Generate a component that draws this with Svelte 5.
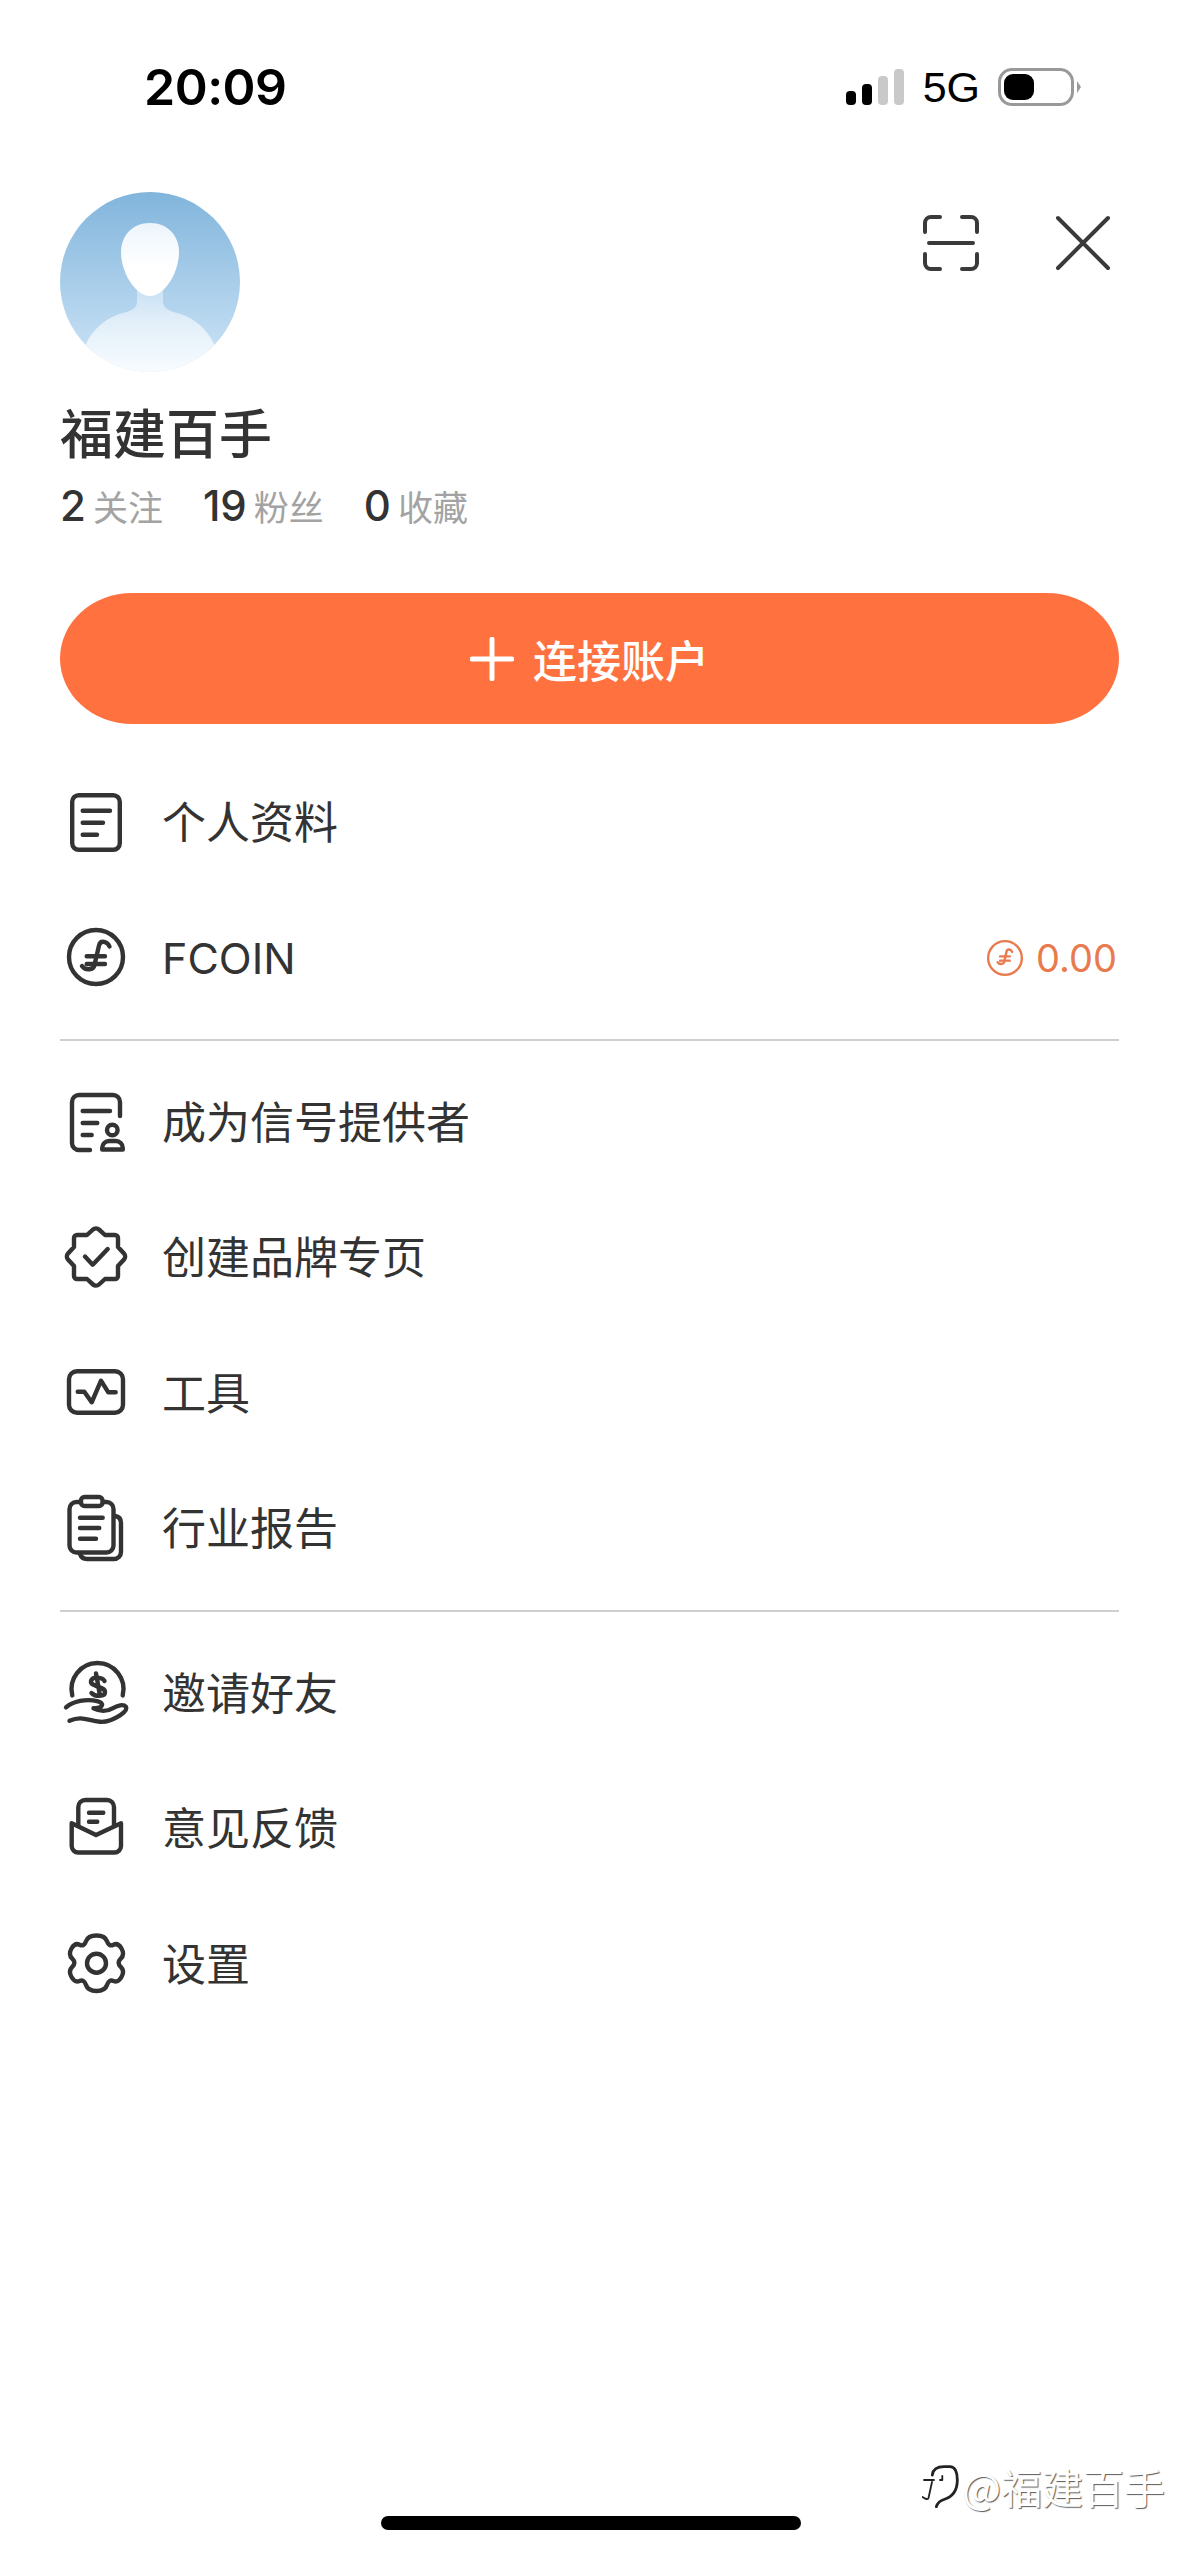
<script>
  const coinF = "M49.500 24.500c-2-5-9-7-10.500-1L34.500 43c-1 5-9 6-12.500 1";

  // gear outline: corners smoothed through the middle of each edge
  const gearPts = [
    [28, 6.5], [45, 6.5], [49, 18], [58, 13.5], [65, 25.5], [56.5, 33.8],
    [65, 42], [58, 54], [49, 50], [45, 62], [28, 62], [24, 50],
    [15, 54], [8, 42], [16.5, 33.8], [8, 25.5], [15, 13.5], [24, 18]
  ];

  function gearPath() {
    const mid = (p, q) => (p[0] + q[0]) / 2 + " " + (p[1] + q[1]) / 2;
    let d = "M" + mid(gearPts[0], gearPts[1]);
    for (let i = 1; i <= gearPts.length; i++) {
      const p = gearPts[i % gearPts.length];
      const q = gearPts[(i + 1) % gearPts.length];
      d += "Q" + p[0] + " " + p[1] + " " + mid(p, q);
    }
    return d + "Z";
  }

  const groups = [
    [
      { label: "个人资料", icon: "doc" },
      { label: "FCOIN", icon: "coin", value: "0.00" }
    ],
    [
      { label: "成为信号提供者", icon: "provider" },
      { label: "创建品牌专页", icon: "badge" },
      { label: "工具", icon: "pulse" },
      { label: "行业报告", icon: "clipboard" }
    ],
    [
      { label: "邀请好友", icon: "hand" },
      { label: "意见反馈", icon: "mail" },
      { label: "设置", icon: "gear" }
    ]
  ];
</script>

{#snippet icon(name)}
  <svg class="icon" viewBox="0 0 72 72" fill="none" stroke="#333" stroke-width="4.4" stroke-linecap="round" stroke-linejoin="round">
    {#if name === "doc"}
      <rect x="12.2" y="8.2" width="47.6" height="54.6" rx="6.5" />
      <path d="M22.7 23.7H50M22.7 35.7H43M22.7 47.7H37" />
    {:else if name === "coin"}
      <circle cx="36" cy="35" r="27" />
      <path d={coinF} />
      <path d="M26.7 34.300H45M26.7 42H45" />
    {:else if name === "provider"}
      <path d="M60 29V15a7 7 0 0 0-7-7H19a7 7 0 0 0-7 7v41a7 7 0 0 0 7 7h11" />
      <path d="M22.7 24H50M22.7 36H37.3M22.7 48H31.7" />
      <circle cx="52.3" cy="43" r="5.3" />
      <path d="M42.2 62.5v-1.5a7 7 0 0 1 7-7h6.6a7 7 0 0 1 7 7v1.5z" />
    {:else if name === "badge"}
      <path d="M33 7.500a4.500 4.500 0 0 1 6 0L45 13h10a3 3 0 0 1 3 3v9l6 6.500a4.500 4.500 0 0 1 0 6L58 44v10a3 3 0 0 1-3 3H45l-6 5.500a4.500 4.500 0 0 1-6 0L27 57H17a3 3 0 0 1-3-3V44l-6-6.500a4.500 4.500 0 0 1 0-6l6-6.500v-9a3 3 0 0 1 3-3h10z" />
      <path d="M25 34.500l7.700 8.200L47.700 27" />
    {:else if name === "pulse"}
      <rect x="9" y="13.200" width="54" height="41.500" rx="8" />
      <path d="M17.700 33.700h6.600l7.400 10.600L41 22.700l7.300 11.600h7.400" />
    {:else if name === "clipboard"}
      <rect x="9.500" y="9" width="44" height="50.500" rx="7" />
      <rect x="21" y="4" width="21.500" height="9" rx="3.500" fill="#fff" />
      <path d="M20 24.700h22.700M20 35h19.300M20 45.700h16" />
      <path d="M55 23c3.500 .5 6 3 6 7v29a7 7 0 0 1-7 7H27c-3.500 0-6-2-7-5" />
    {:else if name === "hand"}
      <path d="M12.300 37.400A26 26 0 1 1 62.700 37.400" />
      <path d="M44.500 23c-2-4-12.500-5-13.500 0-1 6 14 5 14 11 0 5-10 5-13.500 1M36 15.500l4 22" />
      <path d="M6 49.300c7-6 20-9 32-6 6 1.500 6 7-4.500 7 6 3 13 3.500 19 0 5-3 11-4.500 13.500-1.500 1.500 3-2 6-6 8.500-7 4.500-13 7-20 6.500-12-1-18-6.500-30.500-1" />
    {:else if name === "mail"}
      <path d="M11.700 30.300V53a6.500 6.500 0 0 0 6.500 6.500h36.300A6.500 6.500 0 0 0 61 53V30.300L36 42z" />
      <path d="M18.300 33V14a7 7 0 0 1 7-7h21.700a7 7 0 0 1 7 7v19" />
      <path d="M29 19.700h14.300M29 28.700h8.300" />
    {:else if name === "gear"}
      <path d={gearPath()} />
      <circle cx="36.500" cy="34.200" r="9.500" />
    {/if}
  </svg>
{/snippet}

<div class="screen">
  <div class="status">
    <span class="time">20:09</span>
    <div class="status-right">
      <div class="signal"><i class="on s1"></i><i class="on s2"></i><i class="s3"></i><i class="s4"></i></div>
      <span class="net">5G</span>
      <div class="battery"><div class="charge"></div></div>
      <div class="nub"></div>
    </div>
  </div>

  <div class="header">
    <svg class="avatar" viewBox="0 0 180 180">
      <defs>
        <linearGradient id="sky" x1="0" y1="0" x2="0" y2="1">
          <stop offset="0" stop-color="#81b5dc" />
          <stop offset="1" stop-color="#cfe5f7" />
        </linearGradient>
        <linearGradient id="face" x1="0" y1="0" x2="0" y2="1">
          <stop offset="0" stop-color="#ecf5fc" />
          <stop offset="0.6" stop-color="#ffffff" />
        </linearGradient>
        <linearGradient id="chest" x1="0" y1="0" x2="0" y2="1">
          <stop offset="0" stop-color="#c3def3" />
          <stop offset="0.45" stop-color="#e2eff9" />
          <stop offset="1" stop-color="#f8fcff" />
        </linearGradient>
        <clipPath id="round"><circle cx="90" cy="90" r="90" /></clipPath>
      </defs>
      <g clip-path="url(#round)">
        <rect width="180" height="180" fill="url(#sky)" />
        <path d="M77 90h26v20c0 6 6 9 14 11 16 4 30 15 38 33v26H25v-26c8-18 22-29 38-33 8-2 14-5 14-11z" fill="url(#chest)" />
        <path d="M90 31c18 0 29 13 29 29 0 20-14 44-29 44s-29-24-29-44c0-16 11-29 29-29z" fill="url(#face)" />
      </g>
    </svg>
    <div class="actions">
      <svg class="action" viewBox="0 0 60 60" fill="none" stroke="#3a3a3a" stroke-width="4" stroke-linecap="round">
        <path d="M4 19V10a6 6 0 0 1 6-6h9M41 4h9a6 6 0 0 1 6 6v9M4 41v9a6 6 0 0 0 6 6h9M41 56h9a6 6 0 0 0 6-6v-9M8 30h44" />
      </svg>
      <svg class="action" viewBox="0 0 60 60" fill="none" stroke="#3a3a3a" stroke-width="4" stroke-linecap="round">
        <path d="M5 5l50 50M55 5L5 55" />
      </svg>
    </div>
  </div>

  <h1 class="name">福建百手</h1>
  <div class="stats">
    <span><b>2</b><em>关注</em></span>
    <span><b>19</b><em>粉丝</em></span>
    <span><b>0</b><em>收藏</em></span>
  </div>

  <button class="connect">
    <svg class="plus" viewBox="0 0 40 40" fill="none" stroke="#fff" stroke-width="4.500" stroke-linecap="round"><path d="M20 2v36M2 20h36" /></svg>
    <span>连接账户</span>
  </button>

  <div class="menu">
    {#each groups as group, i}
      {#if i > 0}<div class="divider"></div>{/if}
      <ul>
        {#each group as row}
          <li>
            {@render icon(row.icon)}
            <span class="label" class:latin={row.value}>{row.label}</span>
            {#if row.value}
              <span class="value">
                <svg class="mini" viewBox="0 0 72 72" fill="none" stroke="#e97a4e" stroke-width="4.500" stroke-linecap="round">
                  <circle cx="36" cy="36" r="32" />
                  <path d={coinF} />
                  <path d="M26.700 33H45M26.700 41H45" />
                </svg>
                {row.value}
              </span>
            {/if}
          </li>
        {/each}
      </ul>
    {/each}
  </div>

  <div class="watermark">
    <svg class="logo" viewBox="0 0 37 44" fill="none" stroke="#222" stroke-linecap="round">
      <path stroke-width="2.800" d="M10.300 11C11 5 15 2.700 22 2.700h6c5 0 7.500 5.300 7.300 14.300-.3 11-5.300 16-13.300 18.500-5 1.500-6.500 3.500-7.700 7.200" />
      <path stroke-width="1.800" d="M2 16h10M18 16h2M20.300 12v4M10 18 6.500 34c-.5 2-3 1-6-1" />
    </svg>
    <span>@福建百手</span>
  </div>

  <div class="home-bar"></div>
</div>

<style>
  :global(body) {
    margin: 0;
    background: #fff;
  }
  .screen {
    position: relative;
    width: 1179px;
    height: 2556px;
    box-sizing: border-box;
    padding: 0 60px;
    background: #fff;
    overflow: hidden;
    font-family: "Noto Sans CJK SC", "Noto Sans", sans-serif;
    color: #333;
  }
  .status {
    display: flex;
    justify-content: space-between;
    align-items: center;
    height: 174px;
    padding: 0 38px 0 84px;
  }
  .time {
    font-family: Inter, sans-serif;
    font-weight: 600;
    font-size: 50px;
    color: #000;
    letter-spacing: -0.5px;
  }
  .status-right {
    display: flex;
    align-items: center;
  }
  .signal {
    display: flex;
    align-items: flex-end;
    gap: 6px;
    height: 36px;
  }
  .signal i {
    display: block;
    width: 10px;
    border-radius: 4px;
    background: #c9c9c9;
  }
  .signal i.on {
    background: #000;
  }
  .s1 { height: 14px; }
  .s2 { height: 21px; }
  .s3 { height: 29px; }
  .s4 { height: 36px; }
  .net {
    margin-left: 19px;
    font-family: "Liberation Sans", sans-serif;
    font-size: 43px;
    color: #000;
  }
  .battery {
    box-sizing: border-box;
    width: 76px;
    height: 38px;
    margin-left: 18px;
    padding: 3px;
    border: 3px solid #999;
    border-radius: 14px;
  }
  .charge {
    width: 30px;
    height: 100%;
    background: #000;
    border-radius: 9px;
  }
  .nub {
    width: 0;
    height: 0;
    margin-left: 3px;
    border-left: 4px solid #999;
    border-top: 6px solid transparent;
    border-bottom: 6px solid transparent;
  }
  .header {
    display: flex;
    justify-content: space-between;
    align-items: flex-start;
    margin-top: 18px;
  }
  .avatar {
    display: block;
    width: 180px;
    height: 180px;
  }
  .actions {
    display: flex;
    gap: 72px;
    margin-top: 21px;
    margin-right: 6px;
  }
  .action {
    display: block;
    width: 60px;
    height: 60px;
  }
  .name {
    margin: 26px 0 0;
    font-size: 53px;
    line-height: 66px;
    font-weight: 500;
    color: #333;
  }
  .stats {
    display: flex;
    gap: 40px;
    margin-top: 16px;
    height: 50px;
    align-items: center;
  }
  .stats b {
    font-family: Inter, sans-serif;
    font-weight: 500;
    font-size: 42px;
    color: #333;
    margin-right: 7px;
  }
  .stats em {
    font-style: normal;
    font-size: 35px;
    color: #a3a3a3;
  }
  .connect {
    display: flex;
    align-items: center;
    justify-content: center;
    gap: 19px;
    width: 100%;
    height: 131px;
    margin-top: 63px;
    padding: 0;
    border: 0;
    border-radius: 72px / 65.500px;
    background: #ff7240;
    color: #fff;
    font-family: inherit;
    font-size: 44px;
    font-weight: 500;
  }
  .plus {
    width: 44px;
    height: 44px;
  }
  .menu {
    margin-top: 31px;
  }
  ul {
    margin: 0;
    padding: 0;
    list-style: none;
  }
  li {
    display: flex;
    align-items: center;
    gap: 30px;
    height: 135.500px;
  }
  .icon {
    display: block;
    flex: none;
    width: 72px;
    height: 72px;
  }
  .label {
    padding-bottom: 6px;
    font-family: "Noto Sans CJK SC", sans-serif;
    font-size: 44px;
    color: #333;
  }
  .label.latin {
    padding-bottom: 0;
    font-family: Inter, sans-serif;
    font-size: 43px;
  }
  .value {
    display: flex;
    align-items: center;
    gap: 12px;
    margin-left: auto;
    margin-right: 2px;
    font-family: Inter, sans-serif;
    font-size: 38px;
    color: #e97a4e;
  }
  .mini {
    width: 38px;
    height: 38px;
  }
  .divider {
    height: 2px;
    margin: 13px 0 14px;
    background: #cfcfcf;
  }
  .watermark {
    position: absolute;
    right: 14px;
    bottom: 40px;
    display: flex;
    align-items: center;
    gap: 3px;
    font-size: 41px;
    color: #fff;
    text-shadow: 1px 1px 1px rgba(0, 0, 0, 0.65);
  }
  .logo {
    width: 37px;
    height: 44px;
  }
  .home-bar {
    position: absolute;
    left: 381px;
    bottom: 26px;
    width: 420px;
    height: 14px;
    border-radius: 7px;
    background: #000;
  }
</style>
